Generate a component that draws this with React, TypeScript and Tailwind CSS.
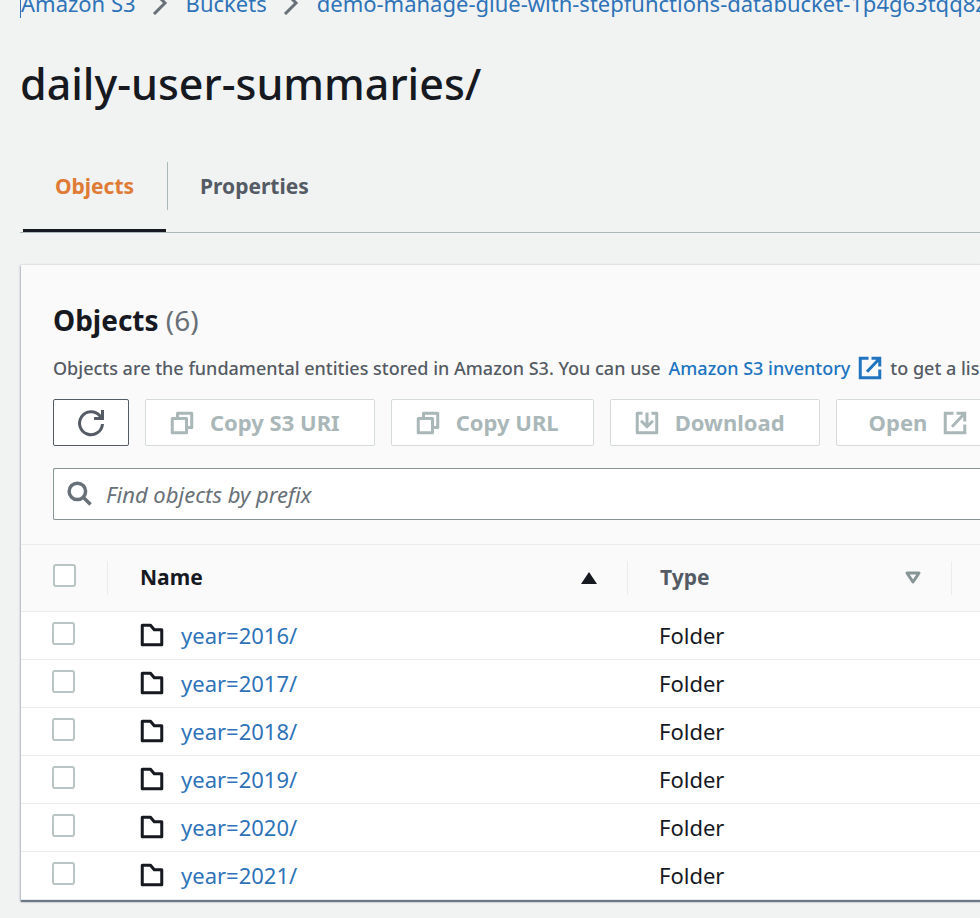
import { useState } from "react";
import type { ReactNode } from "react";

const folders = ["year=2016/", "year=2017/", "year=2018/", "year=2019/", "year=2020/", "year=2021/"];

function Icon({ children, className = "size-6" }: { children: ReactNode; className?: string }) {
  return (
    <svg
      viewBox="0 0 16 16"
      className={`shrink-0 fill-none stroke-current stroke-2 ${className}`}
      aria-hidden="true"
    >
      {children}
    </svg>
  );
}

function ExternalIcon() {
  return (
    <Icon>
      <path d="M7 1.5H1.5v13h13V9" />
      <path d="M9 1.5h5.5V7M14.5 1.5L6 10.5" />
    </Icon>
  );
}

function CopyIcon() {
  return (
    <Icon>
      <path d="M1.5 5h9.500v9.500H1.500z" strokeLinejoin="round" />
      <path d="M5 4.500V1.500h9.500V11h-3" strokeLinejoin="round" />
    </Icon>
  );
}

function DownloadIcon() {
  return (
    <Icon>
      <path d="M5 1.500H1.500v13h13v-13H11" strokeLinejoin="round" />
      <path d="M8 1v9.500M4 6.500l4 4 4-4" />
    </Icon>
  );
}

function Chevron() {
  return (
    <span className="pr-[18px] pl-4">
      <svg viewBox="0 0 16 24" className="h-6 w-4 shrink-0 fill-none stroke-[#687078] stroke-3" aria-hidden="true">
        <path d="M2 1l11 11L2 23" />
      </svg>
    </span>
  );
}

function ActionButton({ children, padding = "pr-[34px] pl-6" }: { children: ReactNode; padding?: string }) {
  return (
    <button
      type="button"
      disabled
      className={`flex h-[47px] shrink-0 items-center gap-4 rounded-xs border border-[#d5dbdb] bg-white text-[22px] font-bold text-[#aab7b8] ${padding}`}
    >
      {children}
    </button>
  );
}

function Checkbox({ label, checked, onChange }: { label: string; checked: boolean; onChange: () => void }) {
  return (
    <input
      type="checkbox"
      aria-label={label}
      checked={checked}
      onChange={onChange}
      className="block size-[23px] appearance-none rounded-[3px] border-2 border-[#b9c4c5] bg-white checked:bg-[#0073bb]"
    />
  );
}

export default function App() {
  const [selected, setSelected] = useState<string[]>([]);
  const [query, setQuery] = useState("");
  const allSelected = selected.length === folders.length;
  const toggle = (name: string) =>
    setSelected(selected.includes(name) ? selected.filter((n) => n !== name) : [...selected, name]);

  return (
    <div className="min-h-screen overflow-hidden bg-[#f1f3f3] pb-4 pl-5 font-['Noto_Sans','Open_Sans',sans-serif] text-[#16191f]">
      <nav aria-label="Breadcrumb" className="flex h-[18px] items-end overflow-hidden whitespace-nowrap text-[22px] leading-[30px] text-[#2e73b8]">
        <ol className="flex items-center">
          <li className="flex items-center"><a href="#s3" className="border-l border-[#2e73b8]">Amazon S3</a></li>
          <li className="flex items-center"><Chevron /><a href="#buckets">Buckets</a></li>
          <li className="flex items-center"><Chevron /><a href="#bucket">demo-manage-glue-with-stepfunctions-databucket-1p4g63tqq8z</a></li>
        </ol>
      </nav>

      <h1 className="mt-9 text-[43px] leading-[60px] font-medium">daily-user-summaries/</h1>

      <div role="tablist" className="mt-12 flex h-[71px] items-start border-b border-[#aab7b8] text-[21px] font-bold">
        <button type="button" role="tab" aria-selected="true" className="ml-[3px] h-[70px] w-[143px] border-b-3 border-[#16191f] pb-[18px] text-[#e07b36]">
          Objects
        </button>
        <button type="button" role="tab" aria-selected="false" className="ml-px h-12 border-l border-[#aab7b8] px-8 pt-0.5 text-[#545b64]">
          Properties
        </button>
      </div>

      <main className="mt-8 ml-px bg-white shadow-[0_2px_1px_rgba(0,20,40,0.45),0_1px_2px_1px_rgba(0,20,60,0.22)]">
        <div className="border-b border-[#eaeded] bg-[#fafafa] pt-9 pb-6 pl-8">
          <h2 className="text-[28px] leading-[38px] font-bold">
            Objects <span className="font-normal text-[#687078]">(6)</span>
          </h2>
          <p className="mt-3 flex h-[34px] items-center gap-2 text-[18px] font-medium whitespace-nowrap text-[#545b64]">
            <span>Objects are the fundamental entities stored in Amazon S3. You can use</span>
            <a href="#inventory" className="flex items-center gap-2 text-[#2074c0]">
              Amazon S3 inventory <ExternalIcon />
            </a>
            <span>to get a list</span>
          </p>
          <div className="mt-3.5 flex gap-4">
            <button type="button" aria-label="Refresh" className="flex h-[47px] w-19 shrink-0 items-center justify-center rounded-xs border border-[#545b64] bg-white text-[#545b64]">
              <svg viewBox="0 0 28 28" className="size-7 fill-none stroke-current stroke-3" aria-hidden="true">
                <path d="M25.500 15A11.500 11.500 0 1 1 23 7l1.500 2" />
                <path d="M25.500 1v8.500H17" />
              </svg>
            </button>
            <ActionButton><CopyIcon />Copy S3 URI</ActionButton>
            <ActionButton><CopyIcon />Copy URL</ActionButton>
            <ActionButton><DownloadIcon />Download</ActionButton>
            <ActionButton padding="pr-6 pl-8">Open<ExternalIcon /></ActionButton>
          </div>
          <label className="mt-[22px] flex h-[52px] items-center gap-3 rounded-l-xs border border-r-0 border-[#879596] bg-white pl-3 text-[#687078]">
            <Icon className="size-7">
              <circle cx="6.500" cy="6.500" r="4.700" />
              <path d="M10 10l4 4" />
            </Icon>
            <input
              type="text"
              aria-label="Find objects by prefix"
              placeholder="Find objects by prefix"
              value={query}
              onChange={(e) => setQuery(e.target.value)}
              className="h-full min-w-0 flex-1 text-[22px] outline-none placeholder:text-[#687078] placeholder:italic"
            />
          </label>
        </div>

        <table className="w-full table-fixed border-collapse text-left text-[22px]">
          <colgroup>
            <col className="w-[86px]" />
            <col className="w-[520px]" />
            <col className="w-[324px]" />
            <col />
          </colgroup>
          <thead className="bg-[#fafafa] text-[21px]">
            <tr className="h-[66px] border-b border-[#eaeded]">
              <th className="p-0 pb-1 pl-8">
                <Checkbox label="Select all objects" checked={allSelected} onChange={() => setSelected(allSelected ? [] : folders)} />
              </th>
              <th aria-sort="ascending" className="p-0">
                <button type="button" className="flex h-[34px] w-full items-center justify-between border-l border-[#eaeded] pr-7 pl-8 font-bold">
                  Name
                  <svg viewBox="0 0 20 16" className="h-4 w-5 fill-current" aria-hidden="true">
                    <path d="M10 2l8 12H2z" />
                  </svg>
                </button>
              </th>
              <th className="p-0 text-[#545b64]">
                <button type="button" className="flex h-[34px] w-full items-center justify-between border-l border-[#eaeded] pr-7 pl-8 font-bold">
                  Type
                  <svg viewBox="0 0 20 16" className="h-4 w-5 fill-none stroke-[#879596] stroke-3" aria-hidden="true">
                    <path d="M4 3h12l-6 9z" strokeLinejoin="round" />
                  </svg>
                </button>
              </th>
              <th className="p-0"><div className="h-[34px] border-l border-[#eaeded]" /></th>
            </tr>
          </thead>
          <tbody>
            {folders.map((name) => (
              <tr key={name} className="h-12 border-b border-[#eaeded]">
                <td className="p-0 pb-1 pl-[31px]">
                  <Checkbox label={`Select ${name}`} checked={selected.includes(name)} onChange={() => toggle(name)} />
                </td>
                <td className="p-0 pl-[33px]">
                  <a href={`#${name}`} className="flex items-center gap-[17px] text-[#2e73b8]">
                    <Icon className="size-6 text-[#16191f]">
                      <path d="M1.500 1.500H7l2.500 3h5v10h-13z" strokeLinejoin="round" />
                    </Icon>
                    {name}
                  </a>
                </td>
                <td className="p-0 pl-8">Folder</td>
                <td className="p-0" />
              </tr>
            ))}
          </tbody>
        </table>
      </main>
    </div>
  );
}
